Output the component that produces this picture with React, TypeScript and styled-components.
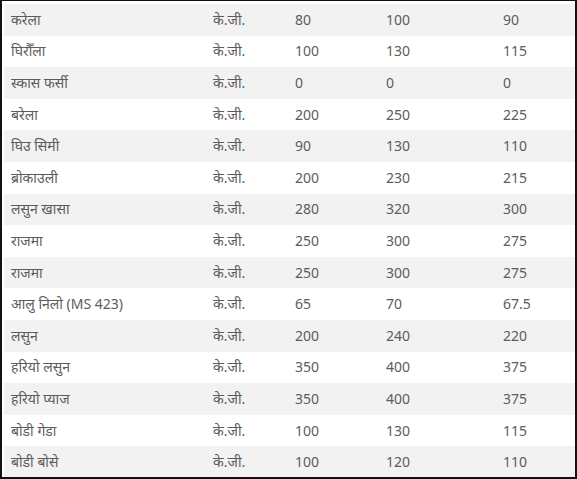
import React from 'react';
import styled, { createGlobalStyle } from 'styled-components';

type PriceRow = {
  name: string;
  unit: string;
  min: string;
  max: string;
  avg: string;
};

const rows: PriceRow[] = [
  { name: 'करेला', unit: 'के.जी.', min: '80', max: '100', avg: '90' },
  { name: 'घिरौँला', unit: 'के.जी.', min: '100', max: '130', avg: '115' },
  { name: 'स्कास फर्सी', unit: 'के.जी.', min: '0', max: '0', avg: '0' },
  { name: 'बरेला', unit: 'के.जी.', min: '200', max: '250', avg: '225' },
  { name: 'घिउ सिमी', unit: 'के.जी.', min: '90', max: '130', avg: '110' },
  { name: 'ब्रोकाउली', unit: 'के.जी.', min: '200', max: '230', avg: '215' },
  { name: 'लसुन खासा', unit: 'के.जी.', min: '280', max: '320', avg: '300' },
  { name: 'राजमा', unit: 'के.जी.', min: '250', max: '300', avg: '275' },
  { name: 'राजमा', unit: 'के.जी.', min: '250', max: '300', avg: '275' },
  { name: 'आलु निलो (MS 423)', unit: 'के.जी.', min: '65', max: '70', avg: '67.5' },
  { name: 'लसुन', unit: 'के.जी.', min: '200', max: '240', avg: '220' },
  { name: 'हरियो लसुन', unit: 'के.जी.', min: '350', max: '400', avg: '375' },
  { name: 'हरियो प्याज', unit: 'के.जी.', min: '350', max: '400', avg: '375' },
  { name: 'बोडी गेडा', unit: 'के.जी.', min: '100', max: '130', avg: '115' },
  { name: 'बोडी बोसे', unit: 'के.जी.', min: '100', max: '120', avg: '110' },
];

const columnWidths = [202, 82, 91, 117, 79];

const GlobalStyle = createGlobalStyle`
  html, body {
    margin: 0;
    padding: 0;
    background: #ffffff;
  }
`;

const App: React.FC = () => {
  return (
    <>
      <GlobalStyle />
      <Frame>
        <PriceTable>
          <colgroup>
            {columnWidths.map((w, i) => (
              <Col key={i} width={w} />
            ))}
          </colgroup>
          <tbody>
            {rows.map((row, i) => (
              <Row key={i} $striped={i % 2 === 0}>
                <Cell>{row.name}</Cell>
                <Cell>{row.unit}</Cell>
                <Cell>{row.min}</Cell>
                <Cell>{row.max}</Cell>
                <Cell>{row.avg}</Cell>
              </Row>
            ))}
          </tbody>
        </PriceTable>
      </Frame>
    </>
  );
};

export default App;

// styled components

const Frame = styled.div`
  width: 577px;
  height: 479px;
  box-sizing: border-box;
  border: 2px solid #111111;
  border-top-width: 1px;
  padding: 3px 0 0 2px;
  background: #ffffff;
  overflow: hidden;
`;

const PriceTable = styled.table`
  width: 571px;
  border-collapse: collapse;
  table-layout: fixed;
  font-family: 'Noto Sans', 'Open Sans', 'DejaVu Sans', sans-serif;
  font-size: 14px;
  color: #5c5c5c;
`;

const Col = styled.col``;

const Row = styled.tr<{ $striped: boolean }>`
  height: 31.6px;
  background-color: ${({ $striped }) => ($striped ? '#f2f2f2' : '#ffffff')};
`;

const Cell = styled.td`
  padding: 0 0 0 7px;
  vertical-align: middle;
  white-space: nowrap;
  line-height: 20px;
`;
